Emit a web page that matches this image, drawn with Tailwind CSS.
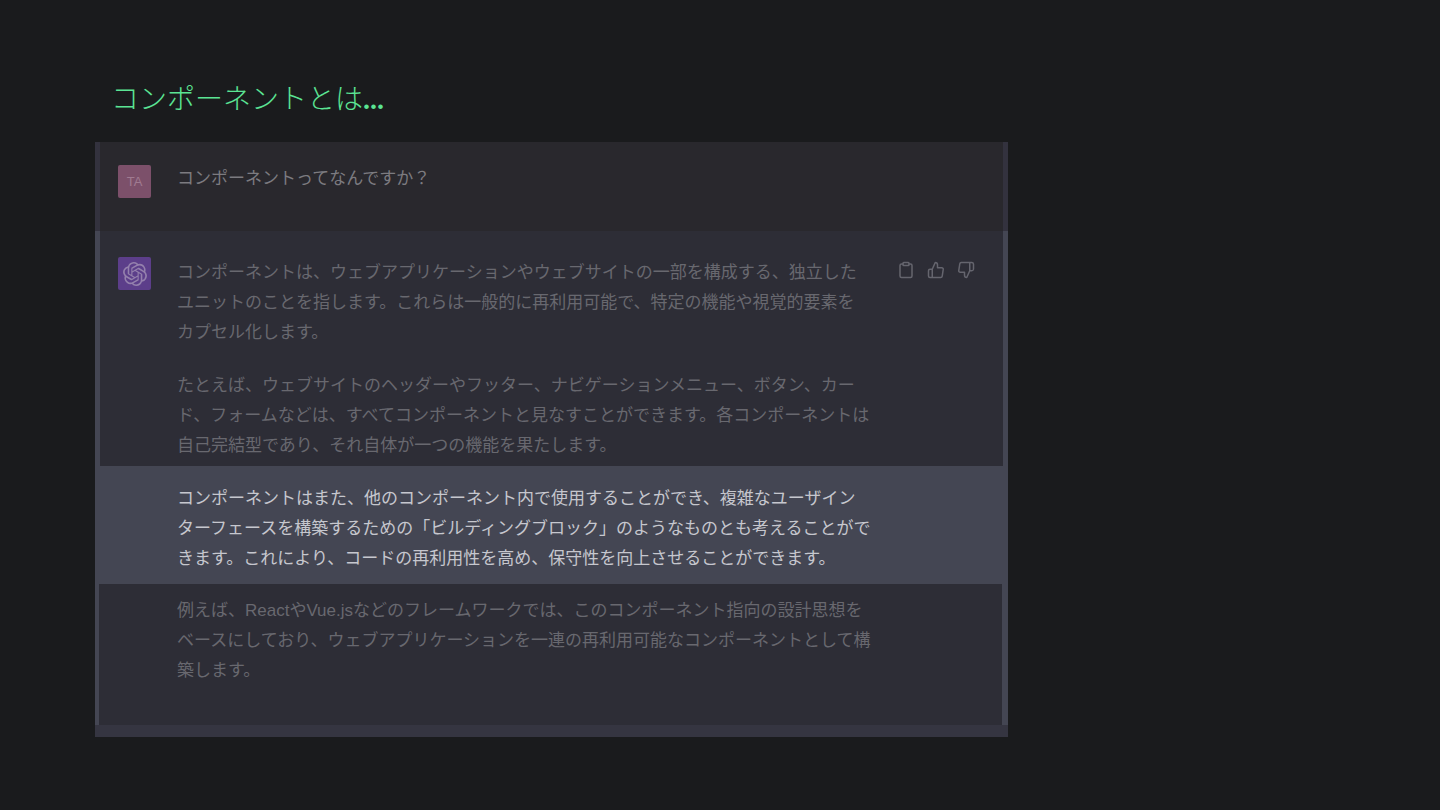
<!DOCTYPE html>
<html lang="ja">
<head>
    <meta charset="UTF-8">
    <meta name="viewport" content="width=device-width, initial-scale=1.0">
    <title>コンポーネントとは...</title>
    <!-- Tailwind CSS for styling -->
    <script src="https://cdn.jsdelivr.net/npm/@tailwindcss/browser@4"></script>
</head>
<body class="min-h-screen bg-[#1a1b1d] pt-[82px] font-['Liberation_Sans','Noto_Sans_CJK_JP',sans-serif]">

    <!-- Slide title -->
    <h1 class="ml-[111px] text-[28px] leading-9 font-extralight text-[#5be494] font-['Liberation_Serif','Noto_Sans_CJK_JP',serif]">コンポーネントとは<span class="font-bold">...</span></h1>

    <!-- Chat -->
    <main class="mt-6 ml-[95px] mr-[30%] text-[17px] leading-[30px] text-[#68686f]">

        <!-- Question -->
        <section class="flex h-[89px] items-start border-x-[5px] border-[#33323e] bg-[#29282d] pt-[23px] pl-[18px]">
            <div class="flex size-[33px] shrink-0 items-center justify-center rounded-xs bg-[#7c506a] text-[13px] text-[#a07b91]">TA</div>
            <p class="-mt-px ml-[26px] text-[#7c7b80]">コンポーネントってなんですか？</p>
        </section>

        <!-- Answer -->
        <section class="flex h-[235px] items-start border-x-[5px] border-[#444653] bg-[#2d2d36] pt-[26px] pl-[18px]">
            <div class="flex size-[33px] shrink-0 items-center justify-center rounded-xs bg-[#5c3e8a]">
                <svg class="size-6 text-[#9480ad]" viewBox="0 0 24 24" fill="currentColor" aria-hidden="true">
                    <path d="M22.2819 9.8211a5.9847 5.9847 0 0 0-.5157-4.9108 6.0462 6.0462 0 0 0-6.5098-2.9A6.0651 6.0651 0 0 0 4.9807 4.1818a5.9847 5.9847 0 0 0-3.9977 2.9 6.0462 6.0462 0 0 0 .7427 7.0966 5.98 5.98 0 0 0 .511 4.9107 6.051 6.051 0 0 0 6.5146 2.9001A5.9847 5.9847 0 0 0 13.2599 24a6.0557 6.0557 0 0 0 5.7718-4.2058 5.9894 5.9894 0 0 0 3.9977-2.9001 6.0557 6.0557 0 0 0-.7475-7.0729zm-9.022 12.6081a4.4755 4.4755 0 0 1-2.8764-1.0408l.1419-.0804 4.7783-2.7582a.7948.7948 0 0 0 .3927-.6813v-6.7369l2.02 1.1686a.071.071 0 0 1 .038.052v5.5826a4.504 4.504 0 0 1-4.4945 4.4944zm-9.6607-4.1254a4.4708 4.4708 0 0 1-.5346-3.0137l.142.0852 4.783 2.7582a.7712.7712 0 0 0 .7806 0l5.8428-3.3685v2.3324a.0804.0804 0 0 1-.0332.0615L9.74 19.9502a4.4992 4.4992 0 0 1-6.1408-1.6464zM2.3408 7.8956a4.485 4.485 0 0 1 2.3655-1.9728V11.6a.7664.7664 0 0 0 .3879.6765l5.8144 3.3543-2.0201 1.1685a.0757.0757 0 0 1-.071 0l-4.8303-2.7865A4.504 4.504 0 0 1 2.3408 7.872zm16.5963 3.8558L13.1038 8.364 15.1192 7.2a.0757.0757 0 0 1 .071 0l4.8303 2.7913a4.4944 4.4944 0 0 1-.6765 8.1042v-5.6772a.79.79 0 0 0-.407-.667zm2.0107-3.0231l-.142-.0852-4.7735-2.7818a.7759.7759 0 0 0-.7854 0L9.409 9.2297V6.8974a.0662.0662 0 0 1 .0284-.0615l4.8303-2.7866a4.4992 4.4992 0 0 1 6.6802 4.66zM8.3065 12.863l-2.02-1.1638a.0804.0804 0 0 1-.038-.0567V6.0742a4.4992 4.4992 0 0 1 7.3757-3.4537l-.142.0805L8.704 5.459a.7948.7948 0 0 0-.3927.6813zm1.0976-2.3654l2.602-1.4998 2.6069 1.4998v2.9994l-2.5974 1.4997-2.6067-1.4997Z"/>
                </svg>
            </div>
            <div class="mt-px ml-[26px] w-[720px] shrink-0 space-y-[23px]">
                <p>コンポーネントは、ウェブアプリケーションやウェブサイトの一部を構成する、独立した<br>ユニットのことを指します。これらは一般的に再利用可能で、特定の機能や視覚的要素を<br>カプセル化します。</p>
                <p>たとえば、ウェブサイトのヘッダーやフッター、ナビゲーションメニュー、ボタン、カー<br>ド、フォームなどは、すべてコンポーネントと見なすことができます。各コンポーネントは<br>自己完結型であり、それ自体が一つの機能を果たします。</p>
            </div>
            <!-- Message actions -->
            <div class="mt-1 flex gap-3 text-[#65656e]">
                <button type="button" aria-label="コピー">
                    <svg class="size-[18px]" viewBox="0 0 24 24" fill="none" stroke="currentColor" stroke-width="2" stroke-linecap="round" stroke-linejoin="round"><path d="M16 4h2a2 2 0 0 1 2 2v14a2 2 0 0 1-2 2H6a2 2 0 0 1-2-2V6a2 2 0 0 1 2-2h2"/><rect x="8" y="2" width="8" height="4" rx="1" ry="1"/></svg>
                </button>
                <button type="button" aria-label="良い回答">
                    <svg class="size-[18px]" viewBox="0 0 24 24" fill="none" stroke="currentColor" stroke-width="2" stroke-linecap="round" stroke-linejoin="round"><path d="M14 9V5a3 3 0 0 0-3-3l-4 9v11h11.28a2 2 0 0 0 2-1.7l1.38-9a2 2 0 0 0-2-2.3zM7 22H4a2 2 0 0 1-2-2v-7a2 2 0 0 1 2-2h3"/></svg>
                </button>
                <button type="button" aria-label="悪い回答">
                    <svg class="size-[18px]" viewBox="0 0 24 24" fill="none" stroke="currentColor" stroke-width="2" stroke-linecap="round" stroke-linejoin="round"><path d="M10 15v4a3 3 0 0 0 3 3l4-9V2H5.72a2 2 0 0 0-2 1.7l-1.38 9a2 2 0 0 0 2 2.3zm7-13h2.67A2.31 2.31 0 0 1 22 4v7a2.31 2.31 0 0 1-2.33 2H17"/></svg>
                </button>
            </div>
        </section>

        <!-- Highlighted paragraph -->
        <section class="h-[118px] bg-[#444653] pt-[18px] pl-[82px] text-[#c6c7ce]">
            <p class="w-[720px]">コンポーネントはまた、他のコンポーネント内で使用することができ、複雑なユーザイン<br>ターフェースを構築するための「ビルディングブロック」のようなものとも考えることがで<br>きます。これにより、コードの再利用性を高め、保守性を向上させることができます。</p>
        </section>

        <section class="h-[141px] border-r-[6px] border-l-4 border-[#444653] bg-[#2d2d36] pt-3 pl-[78px]">
            <p class="w-[720px]">例えば、ReactやVue.jsなどのフレームワークでは、このコンポーネント指向の設計思想を<br>ベースにしており、ウェブアプリケーションを一連の再利用可能なコンポーネントとして構<br>築します。</p>
        </section>
        <div class="h-3 bg-[#353541]"></div>
    </main>

</body>
</html>
